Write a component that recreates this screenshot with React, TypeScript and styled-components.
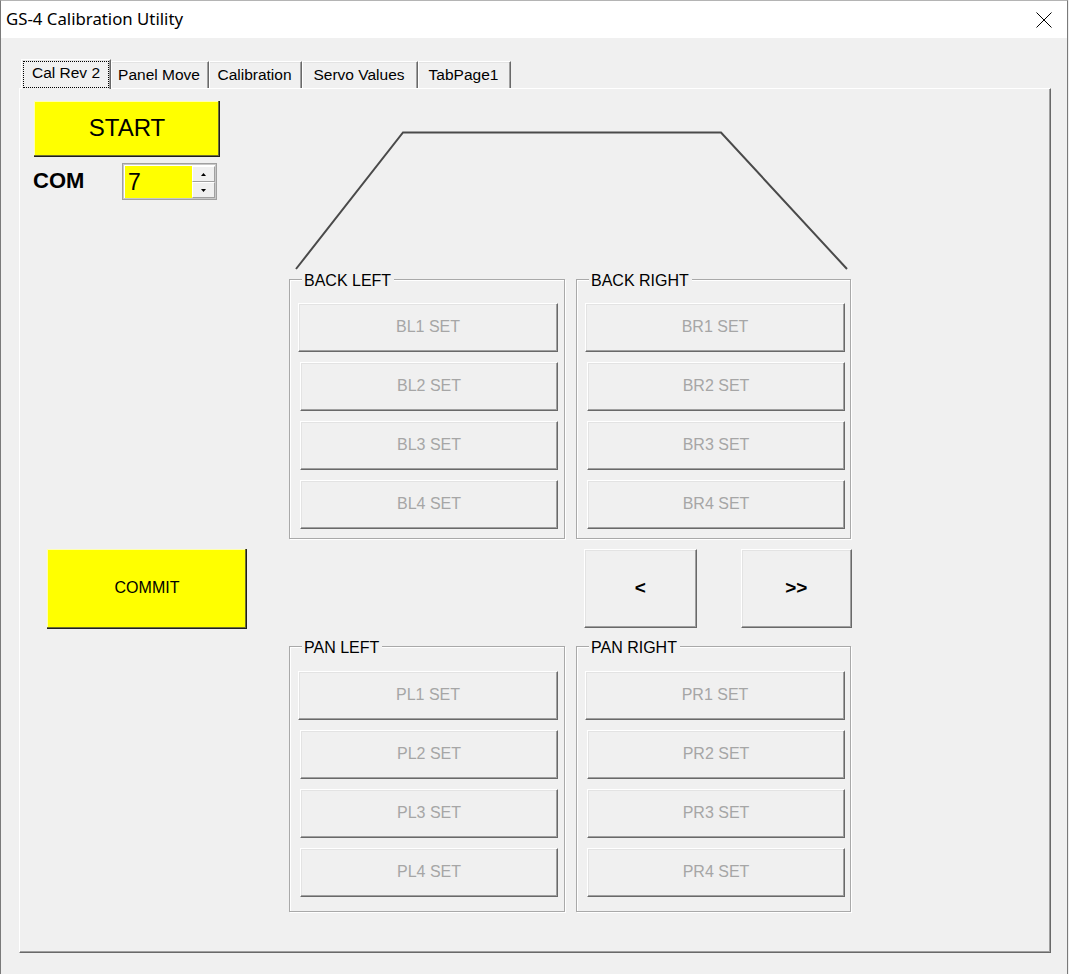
import styled, { createGlobalStyle } from 'styled-components';

const GlobalStyle = createGlobalStyle`
  html, body { margin: 0; padding: 0; background: #f0f0f0; }
  body { font-family: "Liberation Sans", Arial, sans-serif; color: #000; }
  * { box-sizing: border-box; }
`;

const Window = styled.div`
  width: 1068px;
  height: 974px;
  border-left: 1px solid #7a7a7a;
  border-right: 1px solid #7a7a7a;
  border-top: 1px solid #b4b4b4;
  display: flex;
  flex-direction: column;
  background: #f0f0f0;
  overflow: hidden;
`;

const TitleBar = styled.div`
  height: 37px;
  flex-shrink: 0;
  background: #fff;
  display: flex;
  align-items: center;
  justify-content: space-between;
  padding: 0 15px 0 5px;
`;

const Title = styled.div`
  font-family: "Noto Sans", "Open Sans", sans-serif;
  font-size: 16.8px;
  padding-bottom: 2px;
`;

const Client = styled.div`
  flex: 1;
  padding: 21px 0 0 18px;
`;

/* tabs */
const TabStrip = styled.div`
  display: flex;
  align-items: flex-end;
  height: 29px;
  padding-left: 2px;
`;

const Tab = styled.div<{ $w: number; $active?: boolean }>`
  width: ${p => p.$w}px;
  height: ${p => (p.$active ? 30 : 27)}px;
  margin-bottom: ${p => (p.$active ? -1 : 0)}px;
  position: relative;
  z-index: ${p => (p.$active ? 1 : 0)};
  background: #f0f0f0;
  border-top: 1px solid #fff;
  border-left: 1px solid #fff;
  border-right: 1px solid #696969;
  box-shadow: inset -1px 0 0 #a0a0a0, inset 0 1px 0 #e3e3e3;
  display: flex;
  padding: ${p => (p.$active ? '1px 1px 1px 1px' : '0 2px 0 0')};
  font-size: 15.5px;
  align-items: center;
  justify-content: center;
`;

const FocusRect = styled.span`
  flex: 1;
  align-self: stretch;
  border: 1px dotted #000;
  display: flex;
  align-items: center;
  justify-content: center;
  padding-bottom: 4px;
`;

const Panel = styled.div`
  width: 1032px;
  height: 865px;
  border: 1px solid;
  border-color: #fff #696969 #696969 #fff;
  box-shadow: inset -1px -1px 0 #a0a0a0;
  padding: 12px 0 0 14px;
`;

const Content = styled.div`
  display: grid;
  grid-template-columns: 255px 563px;
  grid-template-rows: 178px auto auto auto;
`;

/* left column */
const StartBlock = styled.div`
  display: flex;
  flex-direction: column;
`;

const YellowButton = styled.button<{ $w: number; $h: number; $fs: number }>`
  width: ${p => p.$w}px;
  height: ${p => p.$h}px;
  background: #ffff00;
  border: none;
  box-shadow: inset -1px -1px 0 #1e1e1e, inset -2px -2px 0 #6f6f34, inset 1px 1px 0 #ffffb0;
  font-family: "Liberation Sans", Arial, sans-serif;
  font-size: ${p => p.$fs}px;
  color: #000;
  padding: 0 0 2px;
`;

const ComRow = styled.div`
  margin-top: 6px;
  display: flex;
  align-items: center;
`;

const ComLabel = styled.div`
  width: 89px;
  margin-left: -1px;
  font-size: 22px;
  font-weight: bold;
  padding-bottom: 2px;
`;

const NumBox = styled.div`
  width: 95px;
  height: 37px;
  border: 1px solid #a0a0a0;
  box-shadow: inset 1px 1px 0 #c8c8c8, inset -1px -1px 0 #c8c8c8;
  padding: 2px 1px 1px 2px;
  display: flex;
  background: #fff;
`;

const NumField = styled.div`
  flex: 1;
  background: #ffff00;
  font-size: 23px;
  padding: 1px 0 0 3px;
  line-height: 31px;
`;

const SpinCol = styled.div`
  width: 23px;
  display: flex;
  flex-direction: column;
`;

const SpinBtn = styled.div`
  flex: 1;
  background: #f0f0f0;
  border: 1px solid;
  border-color: #fff #a0a0a0 #a0a0a0 #fff;
  display: flex;
  align-items: center;
  justify-content: center;
`;

const CommitButton = styled(YellowButton)`
  margin: 10px 0 0 13px;
`;

/* right column */
const Trapezoid = styled.svg`
  display: block;
`;

const GroupPair = styled.div<{ $mt?: number }>`
  grid-column: 2;
  display: flex;
  gap: 11px;
  margin-top: ${p => p.$mt ?? 0}px;
`;

const Group = styled.div<{ $w: number; $h: number; $pt: number }>`
  position: relative;
  width: ${p => p.$w}px;
  height: ${p => p.$h}px;
  border: 1px solid #a9a9a9;
  box-shadow: inset 1px 1px 0 #fff, 1px 1px 0 #fff;
  padding: ${p => p.$pt}px 0 0 10px;
  display: flex;
  flex-direction: column;
  gap: 10px;
`;

const Legend = styled.span`
  position: absolute;
  top: -8px;
  left: 12px;
  padding: 0 3px 0 2px;
  background: #f0f0f0;
  font-size: 16px;
  line-height: 18px;
`;

const SetButton = styled.button<{ $first?: boolean }>`
  width: ${p => (p.$first ? 260 : 258)}px;
  margin-left: ${p => (p.$first ? -2 : 0)}px;
  height: 49px;
  flex-shrink: 0;
  background: #f0f0f0;
  border: 1px solid;
  border-color: #fff #696969 #696969 #fff;
  box-shadow: inset -1px -1px 0 #a0a0a0, inset 1px 1px 0 #e3e3e3;
  font-family: "Liberation Sans", Arial, sans-serif;
  font-size: 16px;
  color: #a6a6a6;
  padding: 0 0 2px;
`;

const NavRow = styled.div`
  margin: 10px 0 0 295px;
  display: flex;
  gap: 44px;
  align-items: flex-start;
`;

const NavButton = styled.button<{ $w: number }>`
  width: ${p => p.$w}px;
  height: 79px;
  background: #f0f0f0;
  border: 1px solid;
  border-color: #fff #696969 #696969 #fff;
  box-shadow: inset -1px -1px 0 #a0a0a0, inset 1px 1px 0 #e3e3e3;
  font-family: "Liberation Sans", Arial, sans-serif;
  font-size: 19px;
  font-weight: bold;
  color: #000;
  padding: 0 0 2px;
`;

const tabs = [
  { label: 'Cal Rev 2', w: 90, active: true },
  { label: 'Panel Move', w: 98 },
  { label: 'Calibration', w: 93 },
  { label: 'Servo Values', w: 116 },
  { label: 'TabPage1', w: 93 },
];

function SetGroup({ title, prefix, w, h, pt }: { title: string; prefix: string; w: number; h: number; pt: number }) {
  return (
    <Group $w={w} $h={h} $pt={pt}>
      <Legend>{title}</Legend>
      {[1, 2, 3, 4].map(n => (
        <SetButton key={n} $first={n === 1}>{prefix}{n} SET</SetButton>
      ))}
    </Group>
  );
}

export default function App() {
  return (
    <>
      <GlobalStyle />
      <Window>
        <TitleBar>
          <Title>GS-4 Calibration Utility</Title>
          <svg width="16" height="16" viewBox="0 0 16 16">
            <path d="M0.5 0.5 L15.5 15.5 M15.5 0.5 L0.5 15.5" stroke="#000" strokeWidth="1" fill="none" />
          </svg>
        </TitleBar>
        <Client>
          <TabStrip>
            {tabs.map(t => (
              <Tab key={t.label} $w={t.w} $active={t.active}>
                {t.active ? <FocusRect>{t.label}</FocusRect> : t.label}
              </Tab>
            ))}
          </TabStrip>
          <Panel>
            <Content>
              <StartBlock>
                <YellowButton $w={186} $h={56} $fs={24}>START</YellowButton>
                <ComRow>
                  <ComLabel>COM</ComLabel>
                  <NumBox>
                    <NumField>7</NumField>
                    <SpinCol>
                      <SpinBtn>
                        <svg width="5" height="3" viewBox="0 0 5 3"><path d="M2.5 0 L5 3 L0 3 Z" fill="#000" /></svg>
                      </SpinBtn>
                      <SpinBtn>
                        <svg width="5" height="3" viewBox="0 0 5 3"><path d="M0 0 L5 0 L2.5 3 Z" fill="#000" /></svg>
                      </SpinBtn>
                    </SpinCol>
                  </NumBox>
                </ComRow>
              </StartBlock>

              <Trapezoid width="563" height="178" viewBox="0 0 563 178">
                <polyline points="7,168 114,31.5 432,31.5 558,168" fill="none" stroke="#4a4a4a" strokeWidth="2" />
              </Trapezoid>

              <GroupPair>
                <SetGroup title="BACK LEFT" prefix="BL" w={276} h={260} pt={23} />
                <SetGroup title="BACK RIGHT" prefix="BR" w={275} h={260} pt={23} />
              </GroupPair>

              <CommitButton $w={200} $h={80} $fs={16}>COMMIT</CommitButton>
              <NavRow>
                <NavButton $w={113}>&lt;</NavButton>
                <NavButton $w={112}>&gt;&gt;</NavButton>
              </NavRow>

              <GroupPair $mt={17}>
                <SetGroup title="PAN LEFT" prefix="PL" w={276} h={266} pt={24} />
                <SetGroup title="PAN RIGHT" prefix="PR" w={275} h={266} pt={24} />
              </GroupPair>
            </Content>
          </Panel>
        </Client>
      </Window>
    </>
  );
}
